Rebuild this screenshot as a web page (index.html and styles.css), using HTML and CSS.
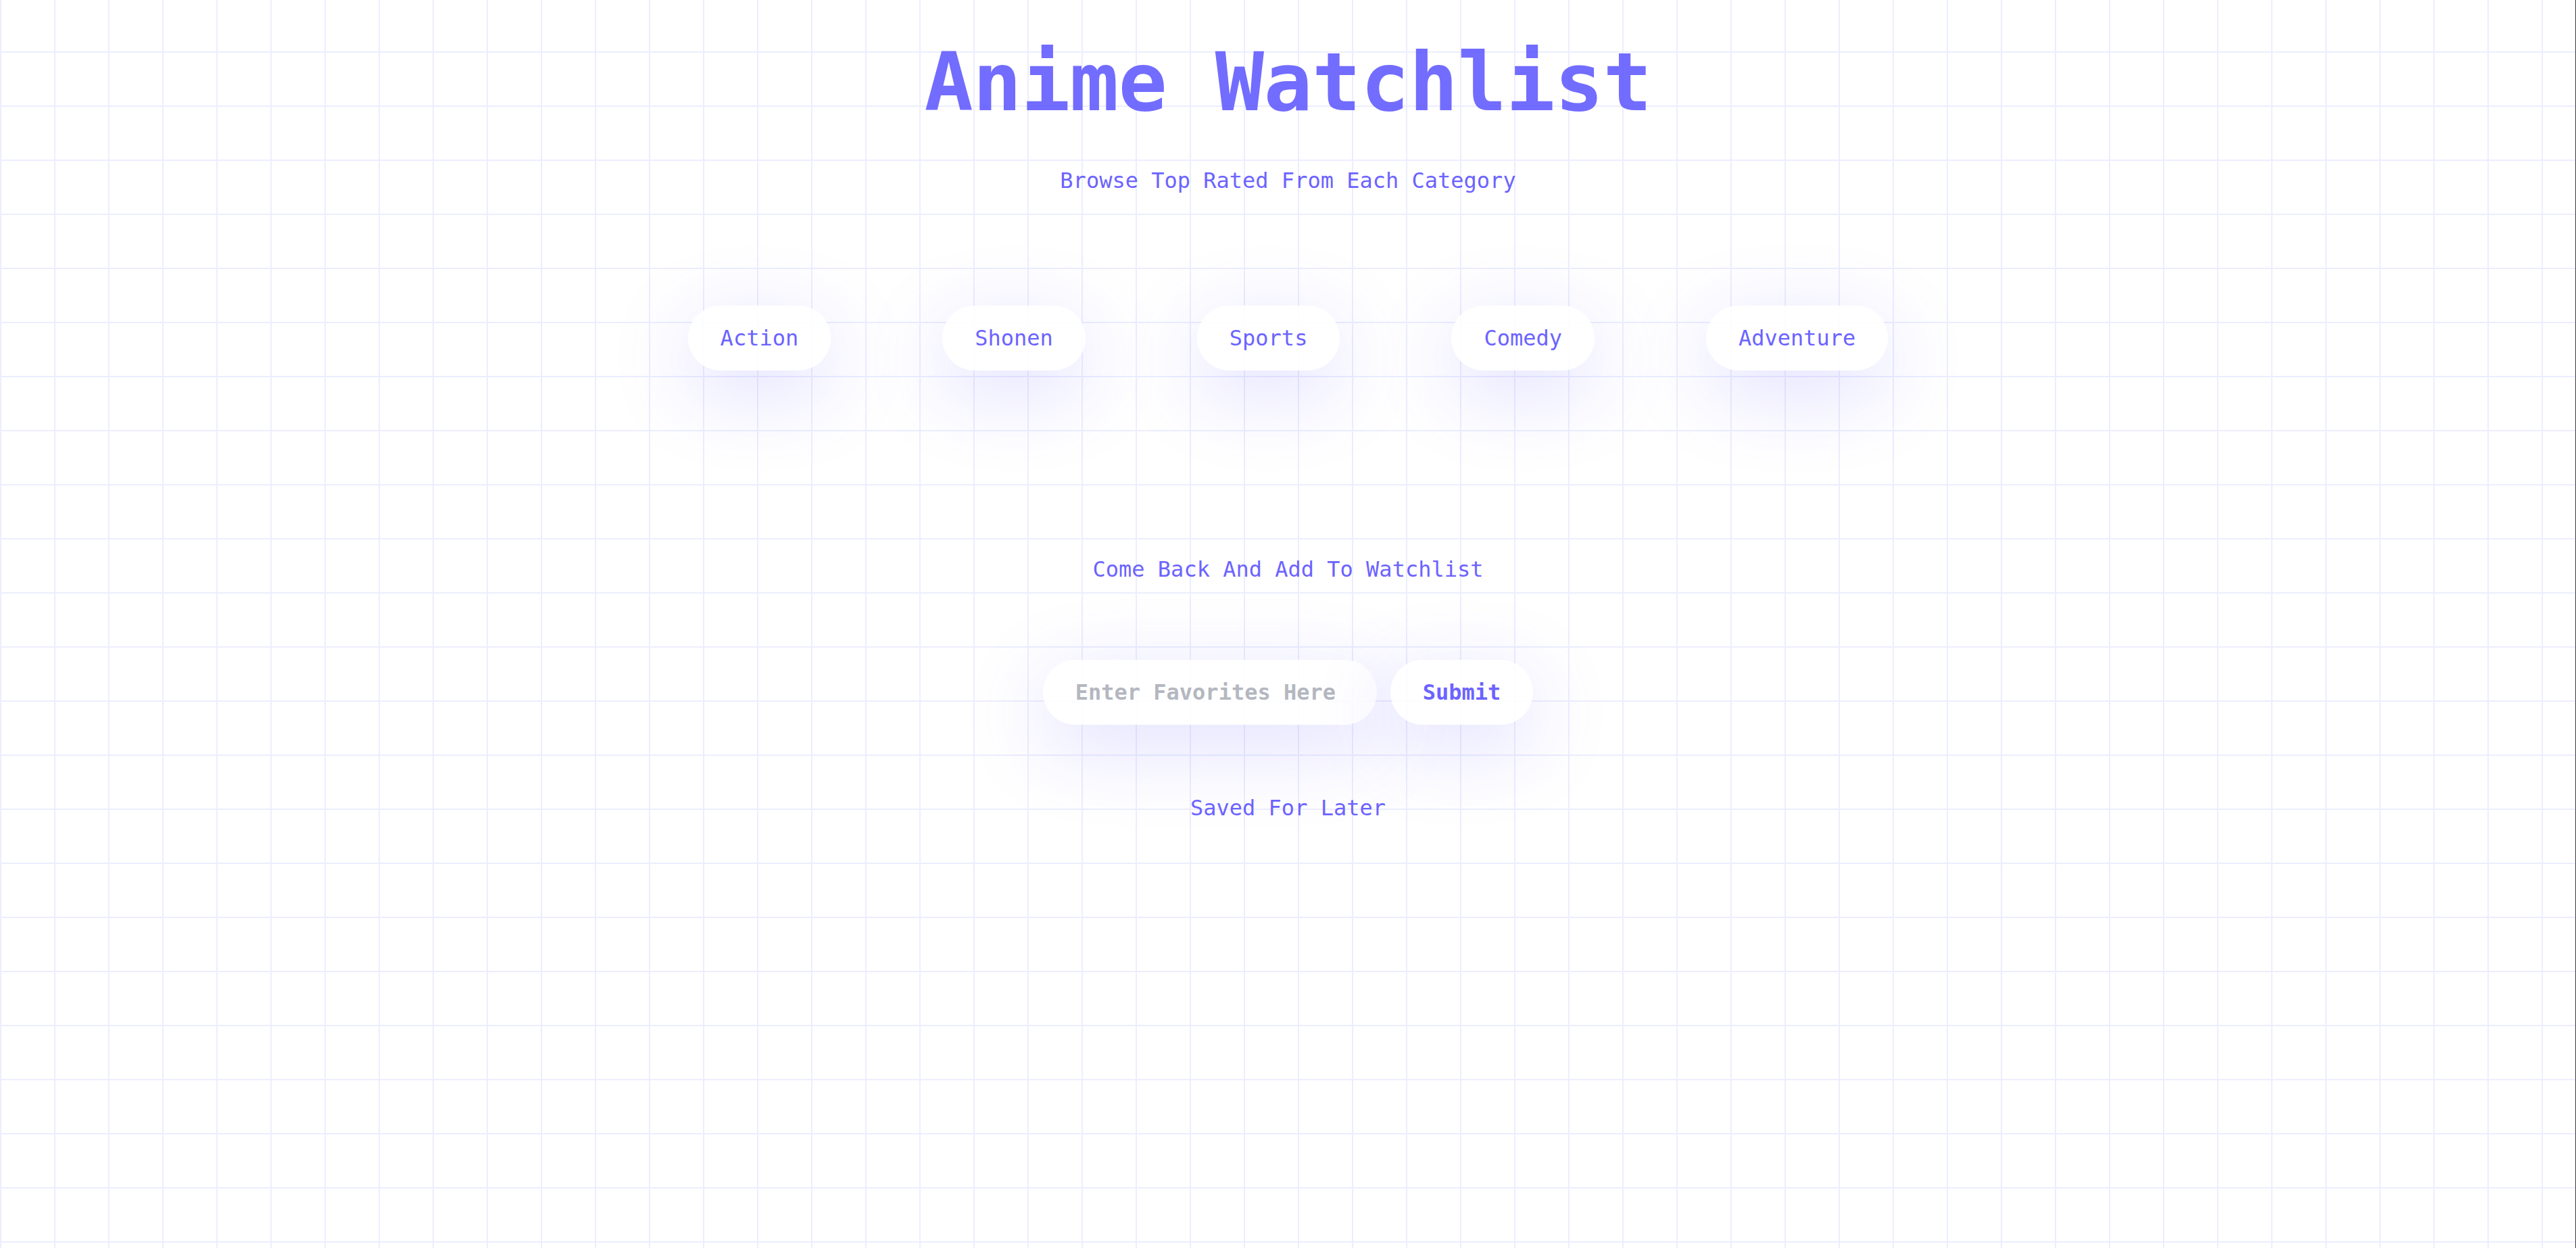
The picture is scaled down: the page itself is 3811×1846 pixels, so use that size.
FILE: index.html
```html
<!DOCTYPE html>
<html lang="en">
<head>
<meta charset="utf-8">
<title>Anime Watchlist</title>
<link rel="stylesheet" href="styles.css">
</head>
<body>
<main class="page">
  <header class="header">
    <h1 class="title">Anime Watchlist</h1>
    <p class="subtitle">Browse Top Rated From Each Category</p>
  </header>
  <nav class="categories">
    <button class="pill">Action</button>
    <button class="pill">Shonen</button>
    <button class="pill">Sports</button>
    <button class="pill">Comedy</button>
    <button class="pill">Adventure</button>
  </nav>
  <section class="watch">
    <p class="watch-label">Come Back And Add To Watchlist</p>
    <form class="add-form">
      <input class="fav-input" type="text" placeholder="Enter Favorites Here">
      <button class="pill submit" type="button">Submit</button>
    </form>
    <p class="saved-label">Saved For Later</p>
  </section>
</main>
</body>
</html>
```

FILE: styles.css
```css
html, body {
  margin: 0;
  padding: 0;
}

body {
  min-height: 100vh;
  font-family: "DejaVu Sans Mono", "Liberation Mono", monospace;
  color: #6c63ff;
  background-color: #ffffff;
  background-image:
    linear-gradient(to right, #eceefe 2px, transparent 2px),
    linear-gradient(to bottom, #eceefe 2px, transparent 2px);
  background-size: 80px 80px;
  background-position: 0 -4px;
  box-shadow: inset -1px 0 0 #3a3a3a;
}

.page {
  display: flex;
  flex-direction: column;
  align-items: center;
}

.header {
  display: flex;
  flex-direction: column;
  align-items: center;
  padding-top: 50px;
}

.title {
  margin: 0;
  font-size: 120px;
  line-height: 144px;
  font-weight: 700;
  letter-spacing: -0.5px;
  color: rgba(99, 92, 255, 0.9);
}

.subtitle {
  margin: 53px 0 0;
  font-size: 32px;
  line-height: 40px;
}

.categories {
  display: flex;
  justify-content: center;
  gap: 165px;
  margin-top: 165px;
}

.pill {
  font-family: inherit;
  font-size: 32px;
  line-height: 36px;
  height: 96px;
  padding: 30px 48px;
  border: none;
  border-radius: 48px;
  color: #6c63ff;
  background: rgba(255, 255, 255, 0.85);
  box-shadow: 0 30px 120px rgba(108, 99, 255, 0.22);
  cursor: pointer;
}

.watch {
  display: flex;
  flex-direction: column;
  align-items: center;
  margin-top: 274px;
}

.watch-label {
  margin: 0;
  font-size: 32px;
  line-height: 40px;
}

.add-form {
  display: flex;
  gap: 20px;
  margin-top: 114px;
}

.fav-input {
  box-sizing: border-box;
  width: 494px;
  height: 96px;
  padding: 0 48px;
  border: none;
  border-radius: 48px;
  font-family: inherit;
  font-size: 32px;
  font-weight: 700;
  color: #6c63ff;
  background: rgba(255, 255, 255, 0.85);
  box-shadow: 0 30px 120px rgba(108, 99, 255, 0.22);
  outline: none;
}

.fav-input::placeholder {
  color: #b4b7c0;
}

.submit {
  font-weight: 700;
}

.saved-label {
  margin: 103px 0 0;
  font-size: 32px;
  line-height: 40px;
}
```
